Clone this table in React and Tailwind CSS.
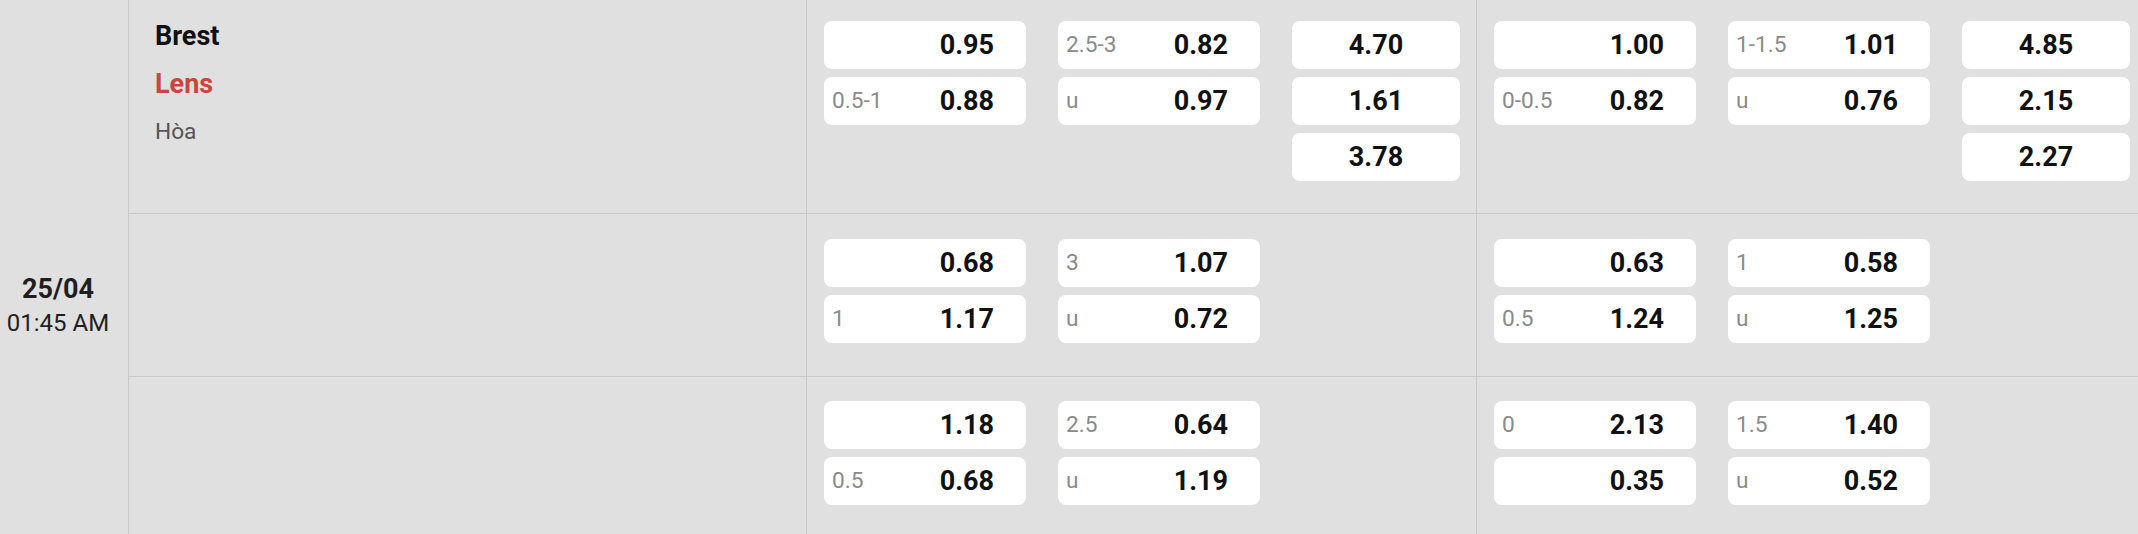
import React from 'react'

const rows = [
  {
    home: 'Brest',
    away: 'Lens',
    draw: 'Hòa',
    groups: [
      {
        hdp: [['', '0.95'], ['0.5-1', '0.88']],
        ou: [['2.5-3', '0.82'], ['u', '0.97']],
        x12: ['4.70', '1.61', '3.78'],
      },
      {
        hdp: [['', '1.00'], ['0-0.5', '0.82']],
        ou: [['1-1.5', '1.01'], ['u', '0.76']],
        x12: ['4.85', '2.15', '2.27'],
      },
    ],
  },
  {
    groups: [
      { hdp: [['', '0.68'], ['1', '1.17']], ou: [['3', '1.07'], ['u', '0.72']] },
      { hdp: [['', '0.63'], ['0.5', '1.24']], ou: [['1', '0.58'], ['u', '1.25']] },
    ],
  },
  {
    groups: [
      { hdp: [['', '1.18'], ['0.5', '0.68']], ou: [['2.5', '0.64'], ['u', '1.19']] },
      { hdp: [['0', '2.13'], ['', '0.35']], ou: [['1.5', '1.40'], ['u', '0.52']] },
    ],
  },
]

// row height / top padding of the odds cells
const rowStyles = [
  { row: 'h-[213px]', pad: 'pt-[21px]' },
  { row: 'h-[163px] border-t border-[#c9c9c9]', pad: 'pt-[25px]' },
  { row: 'h-[163px] border-t border-[#c9c9c9]', pad: 'pt-[24px]' },
]

function OddBox({ label, value }) {
  return (
    <div className="w-[202px] h-[48px] bg-white rounded-lg flex items-center justify-between pl-2 pr-[32px]">
      <span className="text-[22.67px] text-[#8a8a8a]">{label}</span>
      <span className="text-[27px] font-bold text-[#111]">{value}</span>
    </div>
  )
}

function Pair({ items }) {
  return (
    <div className="flex flex-col gap-2">
      {items.map(([label, value], i) => (
        <OddBox key={i} label={label} value={value} />
      ))}
    </div>
  )
}

function Group({ group, last, pad }) {
  return (
    <div className={`flex items-start gap-[32px] pl-[17px] ${pad} ${last ? 'flex-1' : 'w-[670px] border-r border-[#c9c9c9]'}`}>
      <Pair items={group.hdp} />
      <Pair items={group.ou} />
      {group.x12 && (
        <div className="flex flex-col gap-2">
          {group.x12.map((v, i) => (
            <div key={i} className="w-[168px] h-[48px] bg-white rounded-lg flex items-center justify-center text-[27px] font-bold text-[#111]">
              {v}
            </div>
          ))}
        </div>
      )}
    </div>
  )
}

export default function App() {
  return (
    <div className="w-[2138px] h-[534px] overflow-hidden bg-[#e0e0e0] flex font-['Roboto',sans-serif]">
      {/* Date */}
      <div className="w-[129px] shrink-0 border-r border-[#c9c9c9] pt-[273px] pr-[12px] flex flex-col items-center">
        <div className="text-[27px] leading-[32px] font-bold text-[#1f1f1f]">25/04</div>
        <div className="text-[24px] leading-[28px] mt-1 text-[#1f1f1f]">01:45 AM</div>
      </div>

      <div className="flex-1 flex flex-col">
        {rows.map((row, ri) => (
          <div key={ri} className={`flex shrink-0 ${rowStyles[ri].row}`}>
            {/* Teams */}
            <div className="w-[678px] shrink-0 border-r border-[#c9c9c9] pl-[26px] pt-[12px]">
              {row.home && (
                <>
                  <div className="text-[27px] leading-[48px] font-bold text-[#111]">{row.home}</div>
                  <div className="text-[27px] leading-[48px] font-bold text-[#c9463e]">{row.away}</div>
                  <div className="text-[22.67px] leading-[48px] text-[#555]">{row.draw}</div>
                </>
              )}
            </div>
            {row.groups.map((g, gi) => (
              <Group key={gi} group={g} pad={rowStyles[ri].pad} last={gi === row.groups.length - 1} />
            ))}
          </div>
        ))}
      </div>
    </div>
  )
}
